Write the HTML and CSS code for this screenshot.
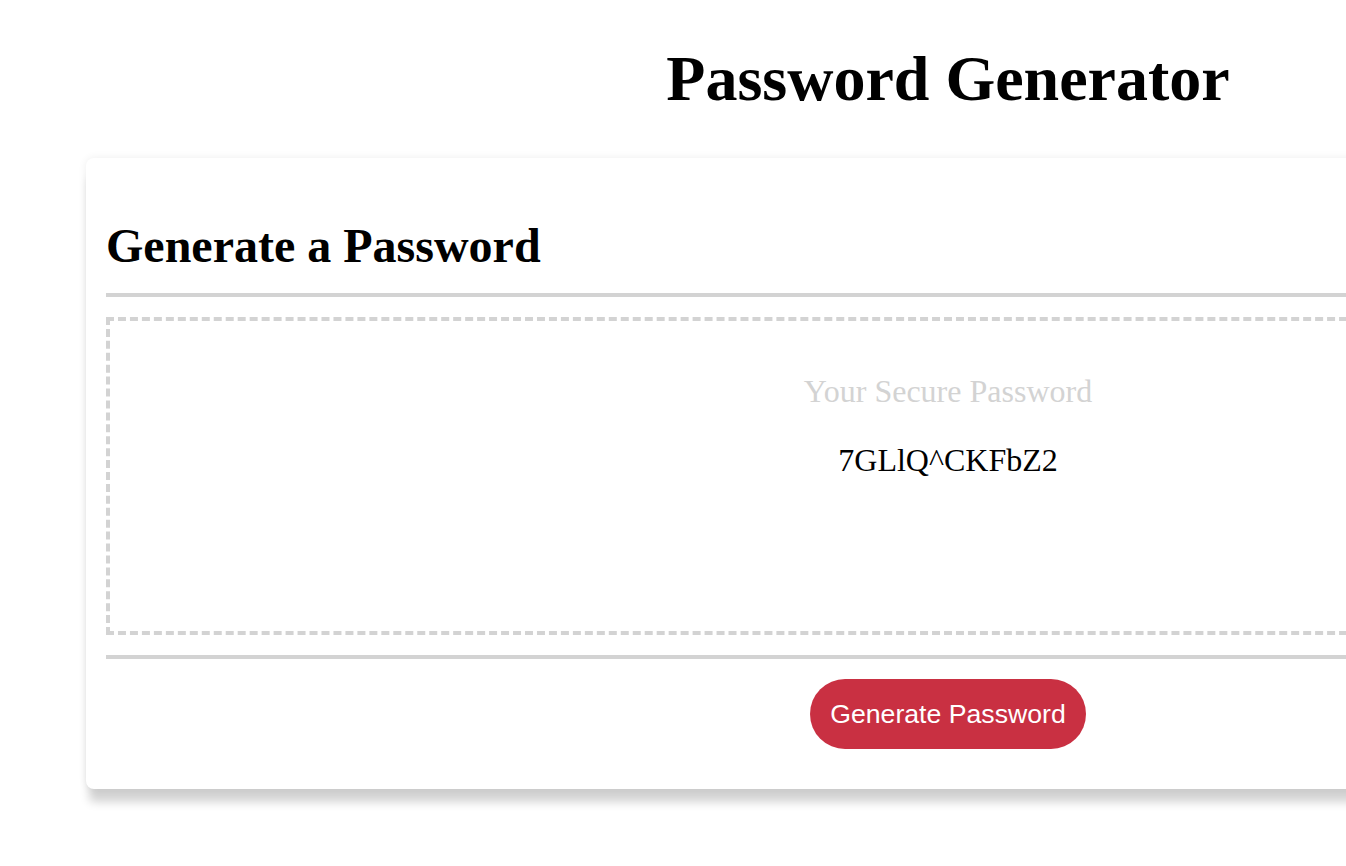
FILE: index.html
```html
<!DOCTYPE html>
<html lang="en">
<head>
<meta charset="utf-8">
<title>Password Generator</title>
<link rel="stylesheet" href="styles.css">
</head>
<body>
<div class="page">
  <header class="site-header">
    <h1>Password Generator</h1>
  </header>
  <section class="card">
    <div class="card-header">
      <h2>Generate a Password</h2>
    </div>
    <div class="card-body">
      <p class="label">Your Secure Password</p>
      <p class="password">7GLlQ^CKFbZ2</p>
    </div>
    <div class="card-footer">
      <button class="btn" type="button">Generate Password</button>
    </div>
  </section>
</div>
</body>
</html>
```

FILE: styles.css
```css
html {
  overflow: hidden;
  background: #ffffff;
}

body {
  margin: 0;
  padding: 0 0 40px;
  font-family: "Liberation Serif", "Times New Roman", serif;
  color: #000;
}

.page {
  width: 1896px;
  padding: 0 86px;
  box-sizing: border-box;
}

.site-header {
  text-align: center;
}

.site-header h1 {
  font-size: 64px;
  font-weight: bold;
  margin: 42px 0 42px;
}

.card {
  background: #fff;
  border-radius: 8px;
  padding: 20px;
  box-shadow: 0 0 8px rgba(0, 0, 0, 0.07), 0 16px 10px -3px #d3d3d3;
}

.card-header h2 {
  font-size: 48px;
  font-weight: bold;
  margin: 40px 0 20px;
}

.card-header::after {
  content: "";
  display: block;
  height: 4px;
  background: #d3d3d3;
}

.card-body {
  margin-top: 20px;
  height: 318px;
  box-sizing: border-box;
  border: 4px dashed #d3d3d3;
  padding-top: 20px;
  text-align: center;
  font-size: 32px;
}

.card-body p {
  margin: 32px 0;
}

.label {
  color: #d3d3d3;
}

.password {
  color: #000;
}

.card-footer {
  margin-top: 20px;
  text-align: center;
}

.card-footer::before {
  content: "";
  display: block;
  height: 4px;
  background: #d3d3d3;
}

.btn {
  margin: 20px 0;
  height: 70px;
  padding: 0 20px;
  border: none;
  border-radius: 35px;
  background: #c93042;
  color: #fff;
  font-family: "Liberation Sans", Arial, sans-serif;
  font-size: 26.67px;
  cursor: pointer;
  vertical-align: top;
}
```
